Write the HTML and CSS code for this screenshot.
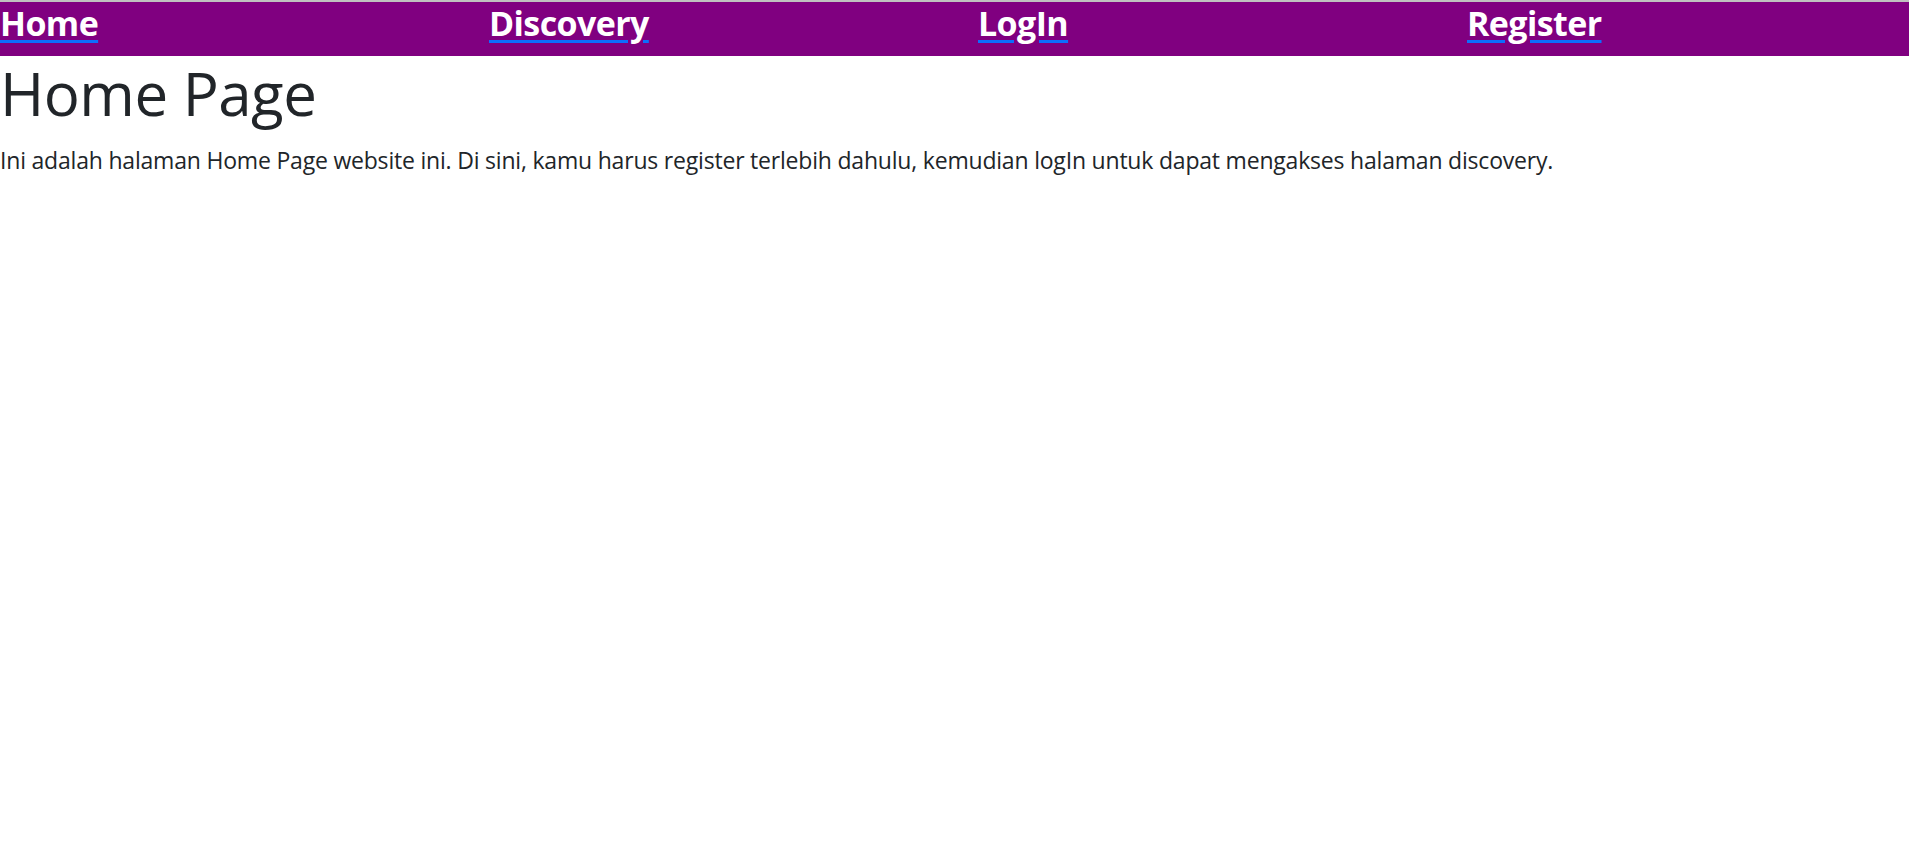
FILE: index.html
```html
<!DOCTYPE html>
<html lang="id">
<head>
<meta charset="utf-8">
<title>Home Page</title>
<link rel="stylesheet" href="styles.css">
</head>
<body>
<div class="topline"></div>
<nav class="navbar">
  <a class="nav-link" href="#">Home</a>
  <a class="nav-link" href="#">Discovery</a>
  <a class="nav-link" href="#">LogIn</a>
  <a class="nav-link" href="#">Register</a>
</nav>
<main class="content">
  <h1 class="title">Home Page</h1>
  <p class="lead-text">Ini adalah halaman Home Page website ini. Di sini, kamu harus register terlebih dahulu, kemudian logIn untuk dapat mengakses halaman discovery.</p>
</main>
</body>
</html>
```
FILE: styles.css
```css
html, body {
  margin: 0;
  padding: 0;
  background: #ffffff;
}
body {
  font-family: "Open Sans", "Noto Sans", "Liberation Sans", sans-serif;
  font-size: 23px;
  line-height: 36px;
  color: #212529;
}
.topline {
  height: 2px;
  background: #c0c0c0;
}
.navbar {
  display: grid;
  grid-template-columns: repeat(4, 489px);
  align-items: start;
  background: #800080;
  height: 54px;
}
.nav-link {
  justify-self: start;
  font-size: 34px;
  line-height: 47px;
  margin-top: -2px;
  font-weight: 700;
  letter-spacing: -0.6px;
  color: #ffffff;
  text-decoration: underline;
  text-decoration-color: #0d6efd;
  text-decoration-thickness: 3px;
  text-underline-offset: 4px;
}
.content {
  display: block;
}
.title {
  margin: 0 0 12px 0;
  font-size: 60px;
  line-height: 74px;
  font-weight: 500;
  letter-spacing: -0.5px;
}
.lead-text {
  margin: 0;
  letter-spacing: -0.2px;
}
```
